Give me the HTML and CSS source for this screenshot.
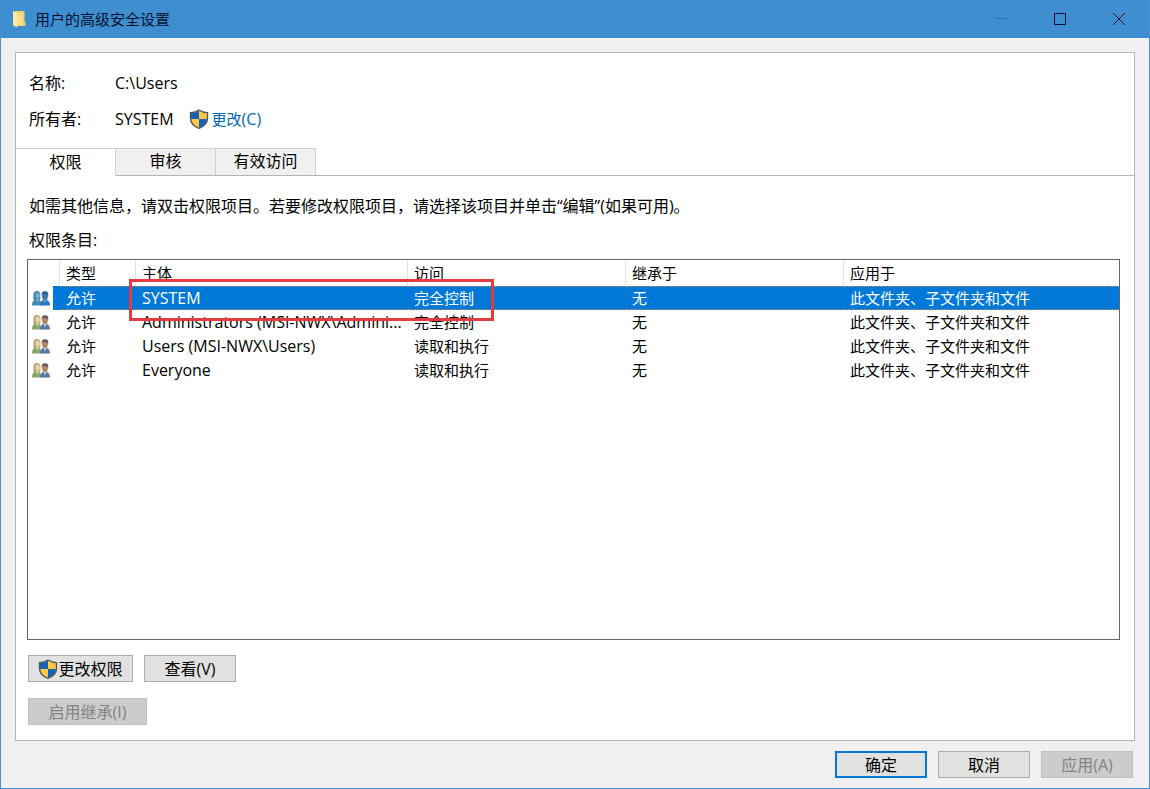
FILE: index.html
```html
<!DOCTYPE html>
<html lang="zh-CN">
<head>
    <meta charset="UTF-8">
    <meta name="viewport" content="width=device-width, initial-scale=1.0">
    <title>用户的高级安全设置</title>
    <link rel="stylesheet" href="styles.css">
</head>
<body>

    <svg class="defs" width="0" height="0" aria-hidden="true">
        <defs>
            <clipPath id="shield-clip">
                <path d="M10 1.5 C7.5 3.2 4.8 4 2 4 V9.5 C2 14 5.5 17 10 19 C14.5 17 18 14 18 9.5 V4 C15.2 4 12.5 3.2 10 1.5 Z"/>
            </clipPath>
            <symbol id="shield" viewBox="0 0 20 20">
                <g clip-path="url(#shield-clip)">
                    <path fill="#1263b8" d="M0 0h10v10H0z"/>
                    <path fill="#ffc843" d="M10 0h10v10H10z"/>
                    <path fill="#ffc843" d="M0 10h10v10H0z"/>
                    <path fill="#1263b8" d="M10 10h10v10H10z"/>
                </g>
                <path fill="none" stroke="#55595c" stroke-width="1.4" d="M10 1 C7.5 2.8 4.8 3.6 1.5 3.6 V9.5 C1.5 14.3 5.3 17.4 10 19.3 C14.7 17.4 18.5 14.3 18.5 9.5 V3.6 C15.2 3.6 12.5 2.8 10 1 Z"/>
            </symbol>
            <symbol id="group" viewBox="0 0 18 16">
                <path fill="#86a86c" d="M0 15.5 C0 11.5 1.5 9.5 5 9.5 C8 9.5 9.5 11.5 9.5 15.5 Z"/>
                <path fill="#a9a468" d="M1.5 9.5 C1.3 4 1.2 1 5 1 C8.6 1 8.6 4.5 8.2 9.5 L5 10.5 Z"/>
                <ellipse cx="5.6" cy="5.6" rx="2.3" ry="3.2" fill="#ecd3ac"/>
                <path fill="#e7d6b2" d="M4 9 h2.8 l-1.2 3.5 Z"/>
                <path fill="#557aa8" d="M8 15.5 C8 12 9.5 10 13 10 C16.5 10 18 12 18 15.5 Z"/>
                <path fill="#e3e9f0" d="M11.6 9.5 h2.8 L13 13.5 Z"/>
                <ellipse cx="13" cy="6.2" rx="2.9" ry="4" fill="#b08766"/>
                <path fill="#6b5f57" d="M9.8 6 C9.2 2.5 10.5 1.3 13 1.3 C15.8 1.3 16.8 3 16.2 6.2 C15.5 4.4 12.5 3.8 10.8 4.2 Z"/>
            </symbol>
            <symbol id="group-selected" viewBox="0 0 18 16">
                <path fill="#4389b6" d="M0 15.5 C0 11.5 1.5 9.5 5 9.5 C8 9.5 9.5 11.5 9.5 15.5 Z"/>
                <path fill="#397dac" d="M1.5 9.5 C1.3 4 1.2 1 5 1 C8.6 1 8.6 4.5 8.2 9.5 L5 10.5 Z"/>
                <ellipse cx="5.6" cy="5.6" rx="2.3" ry="3.2" fill="#79abd0"/>
                <path fill="#79b3df" d="M4 9 h2.8 l-1.2 3.5 Z"/>
                <path fill="#2677c2" d="M8 15.5 C8 12 9.5 10 13 10 C16.5 10 18 12 18 15.5 Z"/>
                <path fill="#78b4ea" d="M11.6 9.5 h2.8 L13 13.5 Z"/>
                <ellipse cx="13" cy="6.2" rx="2.9" ry="4" fill="#3e79a8"/>
                <path fill="#24618f" d="M9.8 6 C9.2 2.5 10.5 1.3 13 1.3 C15.8 1.3 16.8 3 16.2 6.2 C15.5 4.4 12.5 3.8 10.8 4.2 Z"/>
            </symbol>
        </defs>
    </svg>

    <div class="window">
        <header class="titlebar">
            <svg class="folder" viewBox="0 0 14 18" aria-hidden="true">
                <path fill="#f3ce6b" d="M3 1 H12.5 V11 L13.5 12 V16 H3 Z"/>
                <path fill="#ffe9a6" d="M1 1 L5 3 V17.5 L1 15.5 Z"/>
                <path fill="#fbdc87" d="M5 3 H11 V16 H5 Z"/>
            </svg>
            <h1>用户的高级安全设置</h1>
            <div class="window-controls">
                <button type="button" aria-label="最小化" disabled>
                    <svg viewBox="0 0 14 14"><path stroke="#2d74b3" d="M1 6.5h12"/></svg>
                </button>
                <button type="button" aria-label="最大化">
                    <svg viewBox="0 0 14 14"><path d="M1.5 1.5h11v11h-11z"/></svg>
                </button>
                <button type="button" aria-label="关闭">
                    <svg viewBox="0 0 14 14"><path d="M1 1l12 12M13 1L1 13"/></svg>
                </button>
            </div>
        </header>

        <main class="panel">
            <dl class="info">
                <dt>名称:</dt>
                <dd class="latin">C:\Users</dd>
                <dt>所有者:</dt>
                <dd>
                    <span class="latin">SYSTEM</span>
                    <a href="#" class="change"><svg class="shield"><use href="#shield"/></svg><span>更改<span class="latin">(C)</span></span></a>
                </dd>
            </dl>

            <div class="tabs" role="tablist">
                <button type="button" role="tab" aria-selected="true" class="tab active">权限</button>
                <button type="button" role="tab" aria-selected="false" class="tab">审核</button>
                <button type="button" role="tab" aria-selected="false" class="tab">有效访问</button>
            </div>

            <section class="content">
                <p>如需其他信息，请双击权限项目。若要修改权限项目，请选择该项目并单击“编辑”(如果可用)。</p>
                <p id="entries-label">权限条目:</p>

                <div class="list">
                    <table aria-labelledby="entries-label">
                        <colgroup>
                            <col class="col-icon">
                            <col class="col-type">
                            <col class="col-principal">
                            <col class="col-access">
                            <col class="col-inherited">
                            <col>
                        </colgroup>
                        <thead>
                            <tr>
                                <th></th>
                                <th>类型</th>
                                <th>主体</th>
                                <th>访问</th>
                                <th>继承于</th>
                                <th>应用于</th>
                            </tr>
                        </thead>
                        <tbody>
                            <tr class="selected">
                                <td class="icon-cell"><svg class="group"><use href="#group-selected"/></svg></td>
                                <td>允许</td>
                                <td class="latin">SYSTEM</td>
                                <td>完全控制</td>
                                <td>无</td>
                                <td>此文件夹、子文件夹和文件</td>
                            </tr>
                            <tr>
                                <td class="icon-cell"><svg class="group"><use href="#group"/></svg></td>
                                <td>允许</td>
                                <td class="latin">Administrators (MSI-NWX\Admini...</td>
                                <td>完全控制</td>
                                <td>无</td>
                                <td>此文件夹、子文件夹和文件</td>
                            </tr>
                            <tr>
                                <td class="icon-cell"><svg class="group"><use href="#group"/></svg></td>
                                <td>允许</td>
                                <td class="latin">Users (MSI-NWX\Users)</td>
                                <td>读取和执行</td>
                                <td>无</td>
                                <td>此文件夹、子文件夹和文件</td>
                            </tr>
                            <tr>
                                <td class="icon-cell"><svg class="group"><use href="#group"/></svg></td>
                                <td>允许</td>
                                <td class="latin">Everyone</td>
                                <td>读取和执行</td>
                                <td>无</td>
                                <td>此文件夹、子文件夹和文件</td>
                            </tr>
                        </tbody>
                    </table>
                    <div class="marker"></div>
                </div>

                <div class="actions">
                    <button type="button" class="btn btn-shield"><svg class="shield"><use href="#shield"/></svg>更改权限</button>
                    <button type="button" class="btn">查看(V)</button>
                </div>
                <div class="actions">
                    <button type="button" class="btn btn-wide" disabled>启用继承(I)</button>
                </div>
            </section>
        </main>

        <footer class="footer">
            <button type="button" class="btn btn-default">确定</button>
            <button type="button" class="btn">取消</button>
            <button type="button" class="btn" disabled>应用(A)</button>
        </footer>
    </div>

</body>
</html>
```

FILE: styles.css
```css
* {
    box-sizing: border-box;
}

body {
    margin: 0;
    font-family: "Open Sans", "Noto Sans CJK SC", sans-serif;
    font-size: 16px;
    line-height: 24px;
    color: #000;
}

button {
    font: inherit;
    color: inherit;
    border-radius: 0;
}

.defs {
    position: absolute;
}

.window {
    display: flex;
    flex-direction: column;
    min-height: 100vh;
    background: #f0f0f0;
    border: 1px solid #4a90d0;
    border-top: none;
}

/* title bar */
.titlebar {
    display: flex;
    align-items: center;
    height: 38px;
    padding: 0 1px 0 11px;
    background: #3f8ecf;
}

.folder {
    width: 14px;
    height: 18px;
    margin-right: 9px;
}

.titlebar h1 {
    flex: 1;
    margin: 0;
    font-size: 15px;
    font-weight: normal;
    color: #001230;
}

.window-controls {
    display: flex;
}

.window-controls button {
    display: flex;
    align-items: center;
    justify-content: center;
    width: 59px;
    height: 38px;
    padding: 0;
    border: none;
    background: none;
}

.window-controls svg {
    width: 14px;
    height: 14px;
    fill: none;
    stroke: #001230;
}

/* main panel */
.panel {
    display: flex;
    flex-direction: column;
    flex: 1;
    margin: 14px 14px 0;
    background: #fff;
    border: 1px solid #b4b4b4;
}

.info {
    display: grid;
    grid-template-columns: 86px 1fr;
    row-gap: 12px;
    margin: 0;
    padding: 18px 13px 17px;
}

.info dd {
    display: flex;
    align-items: center;
    gap: 15px;
    margin: 0;
    font-size: 15px;
}

.info .latin,
td.latin {
    font-size: 16px;
}

.change {
    display: flex;
    align-items: center;
    gap: 3px;
    color: #0066b4;
    text-decoration: none;
}

.shield {
    width: 20px;
    height: 20px;
}

.tabs {
    display: flex;
    height: 28px;
    border-bottom: 1px solid #b4b4b4;
}

.tab {
    width: 100px;
    height: 28px;
    padding: 0 0 2px;
    background: #f0f0f0;
    border: 1px solid #d0d0d0;
    border-left: none;
    border-bottom-color: #b4b4b4;
}

.tab.active {
    padding: 0;
    background: #fff;
    border-bottom-color: #fff;
}

.content {
    display: flex;
    flex-direction: column;
    flex: 1;
    padding: 14px 14px 15px 11px;
}

.content p {
    margin: 4px 2px 6px;
}

/* permission entries */
.list {
    position: relative;
    flex: 1;
    margin: 1px 0 15px;
    border: 1px solid #646464;
}

table {
    width: 100%;
    table-layout: fixed;
    border-collapse: separate;
    border-spacing: 0;
    font-size: 15px;
}

.col-icon {
    width: 32px;
}

.col-type {
    width: 76px;
}

.col-principal {
    width: 272px;
}

.col-access,
.col-inherited {
    width: 218px;
}

th,
td {
    height: 24px;
    padding: 0 6px;
    font-weight: normal;
    line-height: 24px;
    text-align: left;
    white-space: nowrap;
}

th {
    height: 26px;
    border-right: 1px solid #e2e2e2;
}

th:last-child {
    border-right: none;
}

td.icon-cell {
    padding: 0 0 0 4px;
}

.group {
    display: block;
    width: 18px;
    height: 16px;
}

.selected td {
    line-height: 22px;
    color: #fff;
    background: #0078d7;
    border-top: 1px dotted #b98a5c;
    border-bottom: 1px dotted #b98a5c;
}

.selected td.icon-cell {
    background: linear-gradient(to right, #fff 25px, #0078d7 25px);
    border: none;
}

/* red frame around the selected principal */
.marker {
    position: absolute;
    top: 19px;
    left: 101px;
    width: 365px;
    height: 42px;
    border: 3px solid #e23c41;
}

/* buttons */
.actions {
    display: flex;
    gap: 11px;
    margin-left: 1px;
}

.actions + .actions {
    margin-top: 16px;
}

.btn {
    width: 92px;
    height: 27px;
    padding: 0;
    line-height: 24px;
    background: #e1e1e1;
    border: 1px solid #adadad;
}

.btn:disabled {
    color: #838383;
    background: #ccc;
    border-color: #bfbfbf;
}

.btn-shield {
    display: flex;
    align-items: center;
    justify-content: center;
    width: 105px;
}

.btn-wide {
    width: 119px;
}

.btn-default {
    border: 2px solid #0078d7;
}

.footer {
    display: flex;
    justify-content: flex-end;
    gap: 11px;
    padding: 10px 16px;
}
```
